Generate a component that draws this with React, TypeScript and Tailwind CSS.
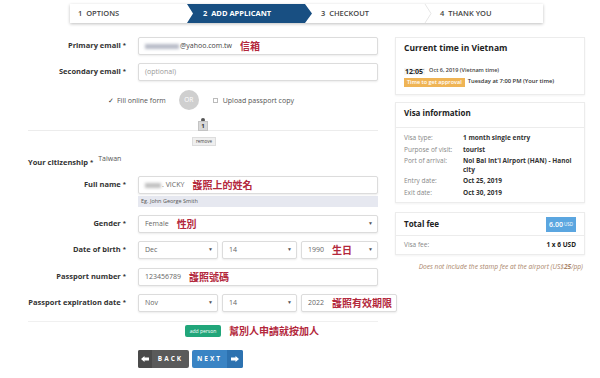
import React from 'react';

const red = "text-[#b3283c] font-['Noto_Sans_CJK_TC',sans-serif] font-bold text-[10px] leading-none";

// One labelled row of the applicant form
const Row = ({ label, children, className = '' }: { label: string; children: React.ReactNode; className?: string }) => (
  <div className={`flex items-center h-[18px] ${className}`}>
    <div className="w-[126px] text-right text-[7.5px] font-bold text-[#333] leading-none whitespace-nowrap">
      {label} <span className="text-[6px] align-top">*</span>
    </div>
    <div className="ml-[12px] w-[240px] h-full flex gap-[4px]">{children}</div>
  </div>
);

const Box = ({ children, className = '', arrow = false }: { children?: React.ReactNode; className?: string; arrow?: boolean }) => (
  <div className={`flex-1 h-full border border-[#dcdcdc] rounded-[2px] bg-white shadow-[0_1px_2px_rgba(0,0,0,0.08)] flex items-center pl-[6px] pr-[4px] text-[7px] text-[#666] ${className}`}>
    <div className="flex-1 flex items-center gap-[8px]">{children}</div>
    {arrow && <span className="text-[5px] text-[#555]">▼</span>}
  </div>
);

const InfoRow = ({ label, value }: { label: string; value: React.ReactNode }) => (
  <div className="flex text-[6.5px] leading-[11.5px]">
    <div className="w-[59px] text-[#888]">{label}</div>
    <div className="flex-1 font-bold text-[#333]">{value}</div>
  </div>
);

const App: React.FC = () => {
  return (
    <div className="w-[600px] h-[378px] bg-white font-['Open_Sans',sans-serif] overflow-hidden">
      {/* steps */}
      <div className="ml-[70px] mt-[4px] w-[473px] h-[19px] flex bg-white shadow-[0_1px_3px_rgba(0,0,0,0.25)] text-[7.5px] font-semibold leading-none">
        <div className="w-[118px] flex items-center pl-[8px] text-[#444]">1&nbsp;&nbsp;OPTIONS</div>
        <div className="w-[125px] -ml-[1px] flex items-center pl-[16px] text-white font-bold bg-[#184f82] [clip-path:polygon(0_0,118px_0,100%_50%,118px_100%,0_100%,6px_50%)]">2&nbsp;&nbsp;ADD APPLICANT</div>
        <div className="w-[117px] flex items-center pl-[9px] text-[#444]">3&nbsp;&nbsp;CHECKOUT</div>
        <svg width="8" height="19" viewBox="0 0 8 19" className="-ml-[5px]">
          <polyline points="1,0 7,9.5 1,19" fill="none" stroke="#e6e6e6" strokeWidth="1" />
        </svg>
        <div className="flex-1 flex items-center pl-[8px] text-[#444]">4&nbsp;&nbsp;THANK YOU</div>
      </div>

      <div className="flex mt-[14px]">
        {/* left form */}
        <div className="w-[395px]">
          <Row label="Primary email">
            <Box className="bg-[#e8f0fe] border-[#d5dcec]">
              <span className="flex items-center">
                <span className="inline-block w-[34px] h-[5px] bg-[#b8bcc8] blur-[1.5px] mr-[1px]"></span>
                <span className="text-[#444]">@yahoo.com.tw</span>
              </span>
              <span className={red}>信箱</span>
            </Box>
          </Row>
          <Row label="Secondary email" className="mt-[8px]">
            <Box className="text-[#999]">(optional)</Box>
          </Row>

          <div className="mt-[9px] h-[20px] flex items-center text-[7px] text-[#555] leading-none">
            <span className="ml-[108px] text-[7px] text-[#333]">✓</span>
            <span className="ml-[3px]">Fill online form</span>
            <div className="ml-[13px] w-[20px] h-[20px] rounded-full bg-[#cfcfcf] text-white text-[6.5px] flex items-center justify-center">OR</div>
            <span className="ml-[14px] w-[5px] h-[5px] border border-[#bbb] bg-white"></span>
            <span className="ml-[5px]">Upload passport copy</span>
          </div>

          {/* applicant tab */}
          <div className="relative mt-[8px] h-[29px]">
            <div className="absolute left-[28px] top-[12px] w-[350px] border-t border-[#ececec]"></div>
            <div className="absolute left-[201px] top-0 w-[4px] h-[4px] rounded-full bg-[#555]"></div>
            <div className="absolute left-[198px] top-[3px] w-[10px] h-[10px] bg-[#d9d9d9] border border-[#c4c4c4] text-[6px] font-bold text-[#333] flex items-center justify-center leading-none">1</div>
            <div className="absolute left-[192px] top-[19px] w-[24px] h-[9px] bg-[#efefef] border border-[#ddd] text-[4.5px] text-[#444] flex items-center justify-center leading-none">remove</div>
          </div>

          <div className="mt-[8px] h-[10px] flex items-start pl-[28px] leading-none">
            <span className="text-[7.5px] font-bold text-[#333] mt-[4px]">Your citizenship <span className="text-[6px] align-top">*</span></span>
            <span className="ml-[5px] text-[7px] text-[#555]">Taiwan</span>
          </div>

          <Row label="Full name" className="mt-[11px]">
            <Box>
              <span className="flex items-center">
                <span className="inline-block w-[16px] h-[5px] bg-[#c0c0c0] blur-[1.5px] mr-[1px]"></span>
                <span className="text-[#666]">. VICKY</span>
              </span>
              <span className={red}>護照上的姓名</span>
            </Box>
          </Row>
          <div className="ml-[138px] mt-[2px] w-[240px] h-[11px] bg-[#e6e8f0] text-[5.5px] text-[#555] flex items-center pl-[3px] leading-none">Eg. John George Smith</div>

          <Row label="Gender" className="mt-[8px]">
            <Box arrow>
              <span>Female</span>
              <span className={red}>性別</span>
            </Box>
          </Row>
          <Row label="Date of birth" className="mt-[8px]">
            <Box arrow className="flex-none w-[80px]">Dec</Box>
            <Box arrow className="flex-none w-[75px]">14</Box>
            <Box arrow>
              <span>1990</span>
              <span className={red}>生日</span>
            </Box>
          </Row>
          <Row label="Passport number" className="mt-[9px]">
            <Box>
              <span>123456789</span>
              <span className={red}>護照號碼</span>
            </Box>
          </Row>
          <Row label="Passport expiration date" className="mt-[8px]">
            <Box arrow className="flex-none w-[80px]">Nov</Box>
            <Box arrow className="flex-none w-[75px]">14</Box>
            <Box className="border-[#bbb] overflow-visible">
              <span>2022</span>
              <span className={`${red} whitespace-nowrap`}>護照有效期限</span>
            </Box>
          </Row>

          <div className="ml-[28px] mt-[9px] w-[350px] border-t border-[#f0f0f0]"></div>
          <div className="mt-[3px] h-[12px] flex items-center">
            <div className="ml-[185px] w-[36px] h-[12px] rounded-[2px] bg-[#21a67a] text-white text-[5px] flex items-center justify-center leading-none">add person</div>
            <span className={`${red} ml-[8px]`}>幫別人申請就按加人</span>
          </div>

          <div className="mt-[13px] ml-[138px] flex gap-[3px] text-white text-[6.5px] font-bold tracking-[2px] leading-none">
            <div className="w-[51px] h-[18px] flex rounded-[2px] overflow-hidden bg-[#5a5a5a]">
              <div className="w-[14px] bg-[#4a4a4a] flex items-center justify-center">
                <svg width="8" height="6" viewBox="0 0 8 6"><path d="M0 3 L3.5 0 L3.5 1.6 L8 1.6 L8 4.4 L3.5 4.4 L3.5 6 Z" fill="#fff" /></svg>
              </div>
              <div className="flex-1 flex items-center justify-center">BACK</div>
            </div>
            <div className="w-[51px] h-[18px] flex rounded-[2px] overflow-hidden bg-[#3a84c4]">
              <div className="flex-1 flex items-center justify-center">NEXT</div>
              <div className="w-[16px] bg-[#2d72b0] flex items-center justify-center">
                <svg width="8" height="6" viewBox="0 0 8 6"><path d="M8 3 L4.5 0 L4.5 1.6 L0 1.6 L0 4.4 L4.5 4.4 L4.5 6 Z" fill="#fff" /></svg>
              </div>
            </div>
          </div>
        </div>

        {/* right column */}
        <div className="w-[190px]">
          <div className="h-[58px] border border-[#ececec] shadow-[0_1px_2px_rgba(0,0,0,0.05)] px-[8px] pt-[6px]">
            <div className="text-[8.5px] font-bold text-[#222] leading-none">Current time in Vietnam</div>
            <div className="mt-[15px] flex items-center gap-[4px] leading-none">
              <span className="text-[7px] font-bold text-[#222] bg-[#f6f6f6] px-[1px]">12:05<sup className="text-[4px]">'</sup></span>
              <span className="text-[5.5px] text-[#444] font-semibold">Oct 6, 2019 (Vietnam time)</span>
            </div>
            <div className="mt-[3px] flex items-center gap-[3px] leading-none">
              <span className="bg-[#efb455] text-white text-[5.5px] font-semibold px-[3px] py-[2px]">Time to get approval</span>
              <span className="text-[5.8px] text-[#333] font-semibold whitespace-nowrap">Tuesday at 7:00 PM (Your time)</span>
            </div>
          </div>

          <div className="mt-[7px] h-[101px] border border-[#ececec] shadow-[0_1px_2px_rgba(0,0,0,0.05)]">
            <div className="h-[25px] border-b border-[#ececec] px-[8px] pt-[6px] text-[8px] font-bold text-[#222] leading-none">Visa information</div>
            <div className="px-[8px] pt-[4px]">
              <InfoRow label="Visa type:" value="1 month single entry" />
              <InfoRow label="Purpose of visit:" value="tourist" />
              <InfoRow label="Port of arrival:" value={<span className="block leading-[9px] mt-[1px] mb-[1px]">Noi Bai Int'l Airport (HAN) - Hanoi city</span>} />
              <InfoRow label="Entry date:" value="Oct 25, 2019" />
              <InfoRow label="Exit date:" value="Oct 30, 2019" />
            </div>
          </div>

          <div className="mt-[9px] h-[43px] border border-[#ececec] shadow-[0_1px_2px_rgba(0,0,0,0.05)]">
            <div className="h-[23px] border-b border-[#ececec] flex items-center justify-between pl-[8px] pr-[8px]">
              <span className="text-[8px] font-bold text-[#222] leading-none">Total fee</span>
              <span className="bg-[#5ba6e0] text-white px-[3px] h-[15px] flex items-center gap-[1px] leading-none">
                <span className="text-[7px] font-semibold">6.00</span>
                <span className="text-[4.5px]">USD</span>
              </span>
            </div>
            <div className="flex justify-between items-center px-[8px] h-[19px] text-[6.5px] leading-none">
              <span className="text-[#888]">Visa fee:</span>
              <span className="font-bold text-[#222]">1 x 6 USD</span>
            </div>
          </div>

          <div className="mt-[9px] text-right pr-[2px] text-[6.6px] italic text-[#a98468] leading-none whitespace-nowrap">
            Does not include the stamp fee at the airport (US$<b>25</b>/pp)
          </div>
        </div>
      </div>
    </div>
  );
};

export default App;
